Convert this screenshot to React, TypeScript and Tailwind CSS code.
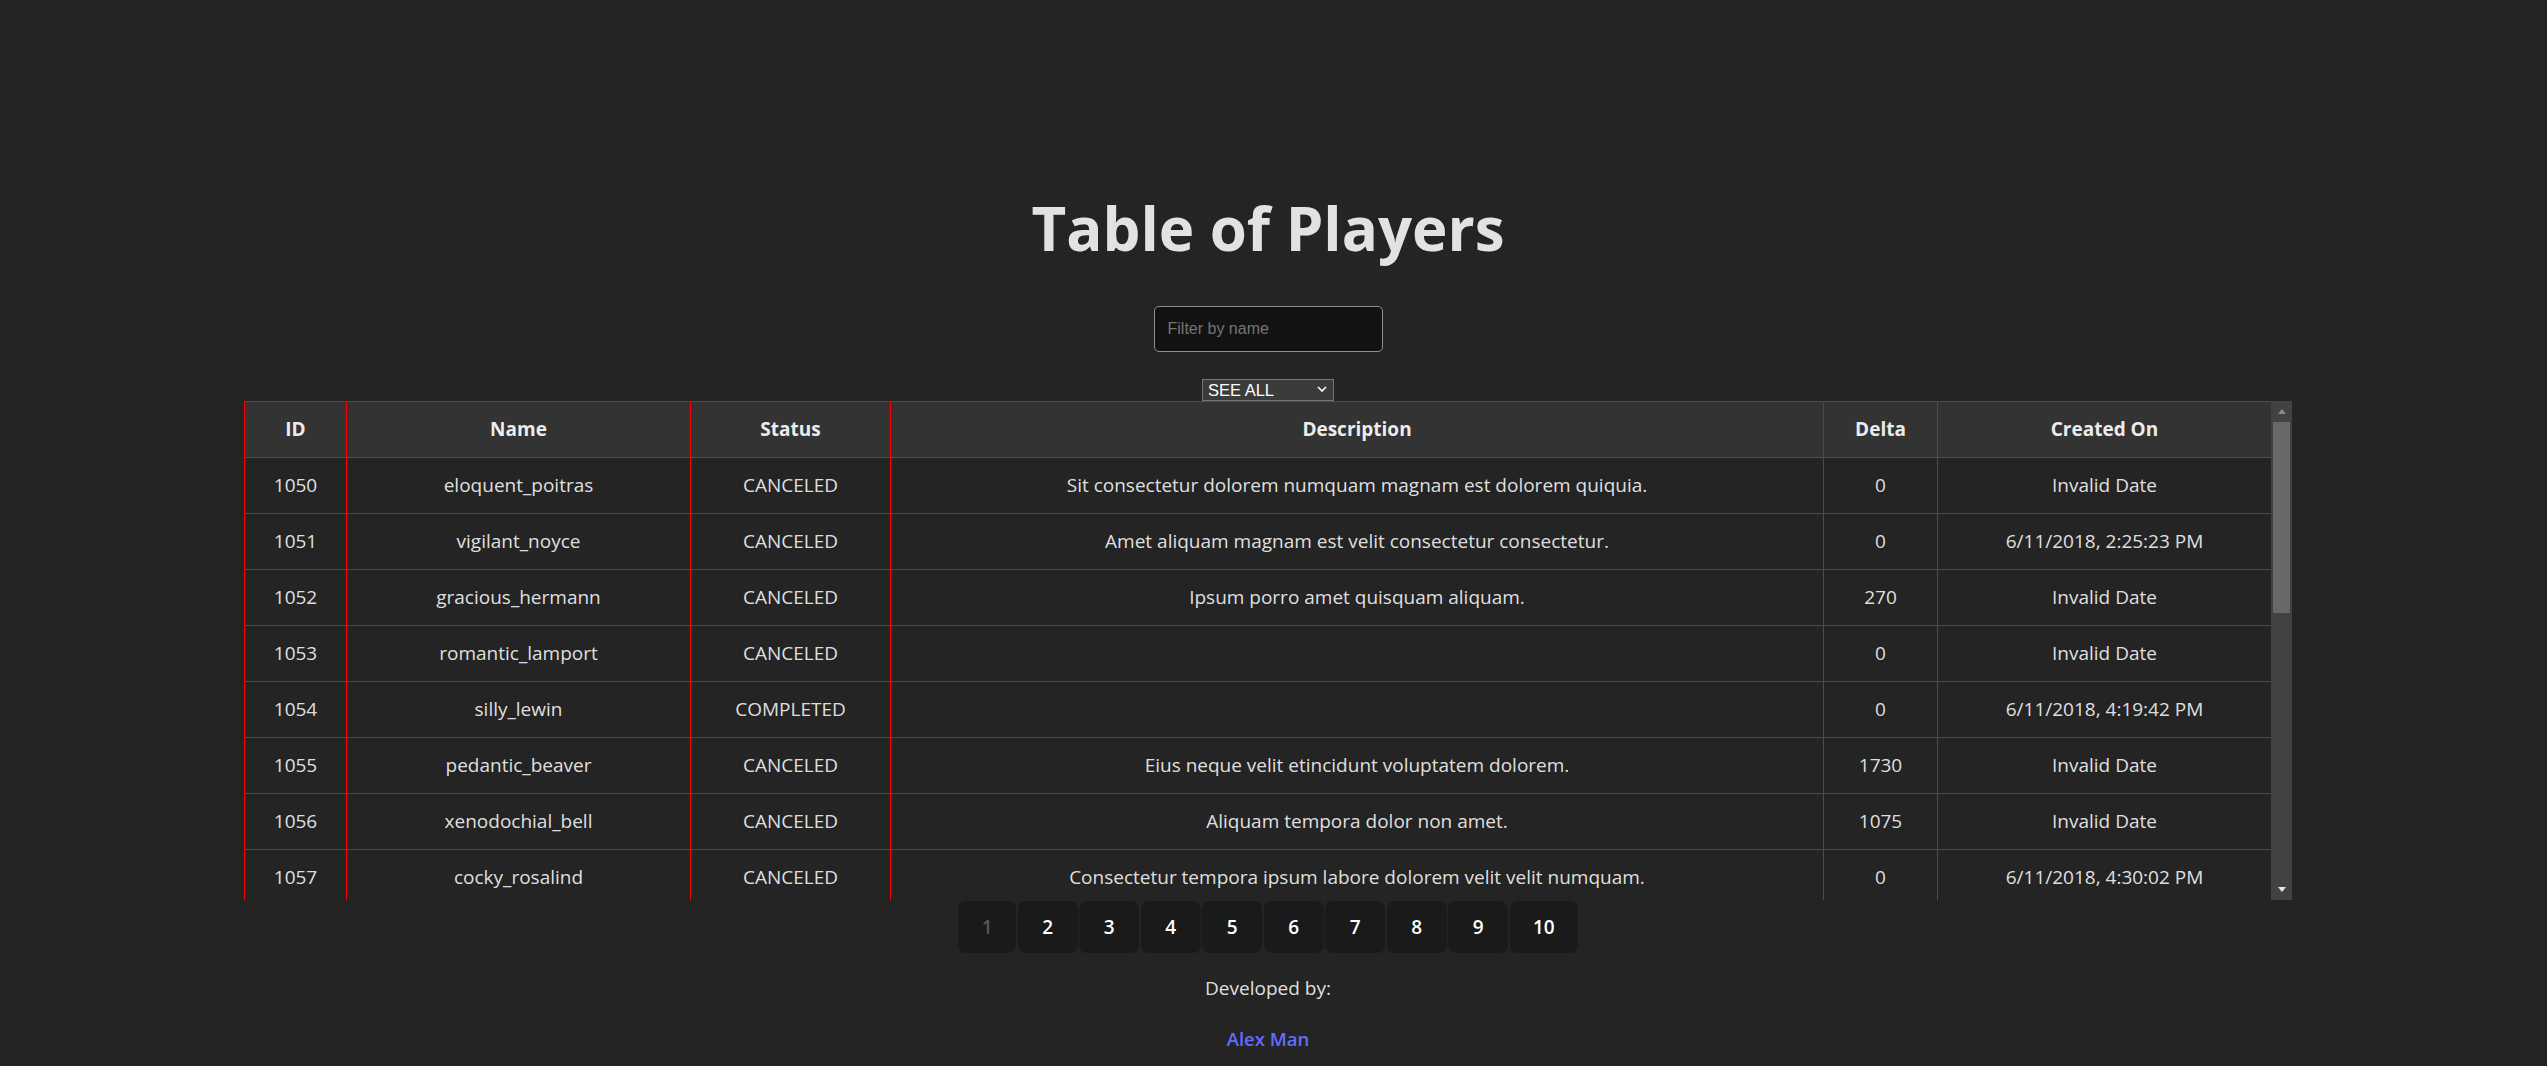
import { useMemo, useState } from "react";

type Player = {
  id: number;
  name: string;
  status: string;
  description: string;
  delta: number;
  createdOn: string;
};

const PLAYERS: Player[] = [
  { id: 1050, name: "eloquent_poitras", status: "CANCELED", description: "Sit consectetur dolorem numquam magnam est dolorem quiquia.", delta: 0, createdOn: "Invalid Date" },
  { id: 1051, name: "vigilant_noyce", status: "CANCELED", description: "Amet aliquam magnam est velit consectetur consectetur.", delta: 0, createdOn: "6/11/2018, 2:25:23 PM" },
  { id: 1052, name: "gracious_hermann", status: "CANCELED", description: "Ipsum porro amet quisquam aliquam.", delta: 270, createdOn: "Invalid Date" },
  { id: 1053, name: "romantic_lamport", status: "CANCELED", description: "", delta: 0, createdOn: "Invalid Date" },
  { id: 1054, name: "silly_lewin", status: "COMPLETED", description: "", delta: 0, createdOn: "6/11/2018, 4:19:42 PM" },
  { id: 1055, name: "pedantic_beaver", status: "CANCELED", description: "Eius neque velit etincidunt voluptatem dolorem.", delta: 1730, createdOn: "Invalid Date" },
  { id: 1056, name: "xenodochial_bell", status: "CANCELED", description: "Aliquam tempora dolor non amet.", delta: 1075, createdOn: "Invalid Date" },
  { id: 1057, name: "cocky_rosalind", status: "CANCELED", description: "Consectetur tempora ipsum labore dolorem velit velit numquam.", delta: 0, createdOn: "6/11/2018, 4:30:02 PM" },
  { id: 1058, name: "nostalgic_hopper", status: "COMPLETED", description: "Quaerat dolor modi tempora.", delta: 0, createdOn: "Invalid Date" },
  { id: 1059, name: "brave_turing", status: "CANCELED", description: "Velit dolore porro sit numquam.", delta: 540, createdOn: "6/11/2018, 5:02:11 PM" },
  { id: 1060, name: "kind_babbage", status: "CANCELED", description: "", delta: 0, createdOn: "Invalid Date" },
  { id: 1061, name: "focused_curie", status: "COMPLETED", description: "Neque quisquam est adipisci.", delta: 0, createdOn: "Invalid Date" },
  { id: 1062, name: "jolly_wozniak", status: "CANCELED", description: "Dolorem magnam ut etincidunt.", delta: 315, createdOn: "6/11/2018, 5:40:57 PM" },
  { id: 1063, name: "zen_kepler", status: "CANCELED", description: "", delta: 0, createdOn: "Invalid Date" },
  { id: 1064, name: "hungry_galileo", status: "CANCELED", description: "Amet sed tempora ipsum.", delta: 0, createdOn: "Invalid Date" },
  { id: 1065, name: "angry_bohr", status: "COMPLETED", description: "Labore numquam non velit.", delta: 890, createdOn: "6/11/2018, 6:12:30 PM" },
  { id: 1066, name: "sharp_lovelace", status: "CANCELED", description: "", delta: 0, createdOn: "Invalid Date" },
  { id: 1067, name: "modest_darwin", status: "CANCELED", description: "Ut dolor aliquam quiquia.", delta: 0, createdOn: "Invalid Date" },
  { id: 1068, name: "happy_tesla", status: "CANCELED", description: "Consectetur est porro dolore.", delta: 1200, createdOn: "6/11/2018, 7:01:44 PM" },
  { id: 1069, name: "clever_noether", status: "COMPLETED", description: "", delta: 0, createdOn: "Invalid Date" },
];

const PAGES = [1, 2, 3, 4, 5, 6, 7, 8, 9, 10];

const cell = "border border-[#ff0000] text-center align-middle";

export default function App() {
  const [filter, setFilter] = useState("");
  const [status, setStatus] = useState("ALL");
  const [page, setPage] = useState(1);

  const rows = useMemo(
    () =>
      PLAYERS.filter((p) => p.name.toLowerCase().includes(filter.toLowerCase())).filter(
        (p) => status === "ALL" || p.status === status,
      ),
    [filter, status],
  );

  return (
    <div className="min-h-screen w-full bg-[#242424] text-[rgba(255,255,255,0.87)] font-['Open_Sans',sans-serif] [color-scheme:dark]">
      <div className="flex w-[2536px] flex-col items-center pt-[195px]">
        <h1 className="text-[60px] font-bold leading-[1.1]">Table of Players</h1>

        <input
          type="text"
          value={filter}
          onChange={(e) => setFilter(e.target.value)}
          placeholder="Filter by name"
          className="mt-[45px] h-[46px] w-[229px] rounded-[5px] border border-[#8f8f8f] bg-[#121212] px-[13px] font-['Liberation_Sans',Arial,sans-serif] text-[16px] text-white outline-none placeholder:text-[#757575]"
        />

        <div className="relative mt-[26px] h-[22px] w-[132px]">
          <select
            value={status}
            onChange={(e) => setStatus(e.target.value)}
            className="h-full w-full appearance-none border border-[#767676] bg-[#3b3b3b] pl-[5px] font-['Liberation_Sans',Arial,sans-serif] text-[16.5px] leading-[20px] text-white outline-none"
          >
            <option value="ALL">SEE ALL</option>
            <option value="CANCELED">CANCELED</option>
            <option value="COMPLETED">COMPLETED</option>
          </select>
          <svg
            viewBox="0 0 10 6"
            className="pointer-events-none absolute right-[7px] top-[8px] h-[6px] w-[10px]"
            fill="none"
            stroke="white"
            strokeWidth="1.6"
          >
            <path d="M1 1l4 4 4-4" />
          </svg>
        </div>

        <div className="mt-[1px] flex h-[499px] w-[2048px]">
          <div className="h-full flex-1 overflow-y-auto [scrollbar-width:none]">
            <table className="w-[2027px] table-fixed border-collapse text-[19px]">
              <colgroup>
                <col className="w-[102px]" />
                <col className="w-[344px]" />
                <col className="w-[200px]" />
                <col className="w-[933px]" />
                <col className="w-[114px]" />
                <col className="w-[334px]" />
              </colgroup>
              <thead>
                <tr className="h-[56px] bg-[#333333] font-bold text-[#ececec]">
                  <th className={cell}>ID</th>
                  <th className={cell}>Name</th>
                  <th className={cell}>Status</th>
                  <th className={cell}>Description</th>
                  <th className={cell}>Delta</th>
                  <th className={cell}>Created On</th>
                </tr>
              </thead>
              <tbody>
                {rows.map((p) => (
                  <tr key={p.id} className="h-[56px]">
                    <td className={cell}>{p.id}</td>
                    <td className={cell}>{p.name}</td>
                    <td className={cell}>{p.status}</td>
                    <td className={cell}>{p.description}</td>
                    <td className={cell}>{p.delta}</td>
                    <td className={cell}>{p.createdOn}</td>
                  </tr>
                ))}
              </tbody>
            </table>
          </div>

          {/* scrollbar as drawn by the browser in the screenshot */}
          <div className="flex h-full w-[21px] flex-col items-center bg-[#424242]">
            <div className="flex h-[21px] w-full items-center justify-center">
              <svg viewBox="0 0 8 5" className="h-[5px] w-[8px]" fill="#8a8a8a">
                <path d="M0 5L4 0l4 5z" />
              </svg>
            </div>
            <div className="h-[191px] w-[17px] bg-[#686868]" />
            <div className="flex-1" />
            <div className="flex h-[21px] w-full items-center justify-center">
              <svg viewBox="0 0 8 5" className="h-[5px] w-[8px]" fill="#e6e6e6">
                <path d="M0 0h8L4 5z" />
              </svg>
            </div>
          </div>
        </div>

        <div className="mt-[1px] flex gap-[1.5px]">
          {PAGES.map((n) => (
            <button
              key={n}
              type="button"
              disabled={n === page}
              onClick={() => setPage(n)}
              className={`h-[52px] rounded-[8px] bg-[#1a1a1a] text-[19px] font-semibold ${
                n === 1 ? "w-[58px]" : n === 10 ? "w-[68px]" : "w-[60px]"
              } ${n === page ? "text-[#555555]" : "text-white"}`}
            >
              {n}
            </button>
          ))}
        </div>

        <p className="mt-[22px] text-[19px] leading-[27px]">Developed by:</p>
        <a href="#" className="mt-[22px] text-[18.5px] font-semibold leading-[30px] text-[#646cff]">
          Alex Man
        </a>
      </div>
    </div>
  );
}
